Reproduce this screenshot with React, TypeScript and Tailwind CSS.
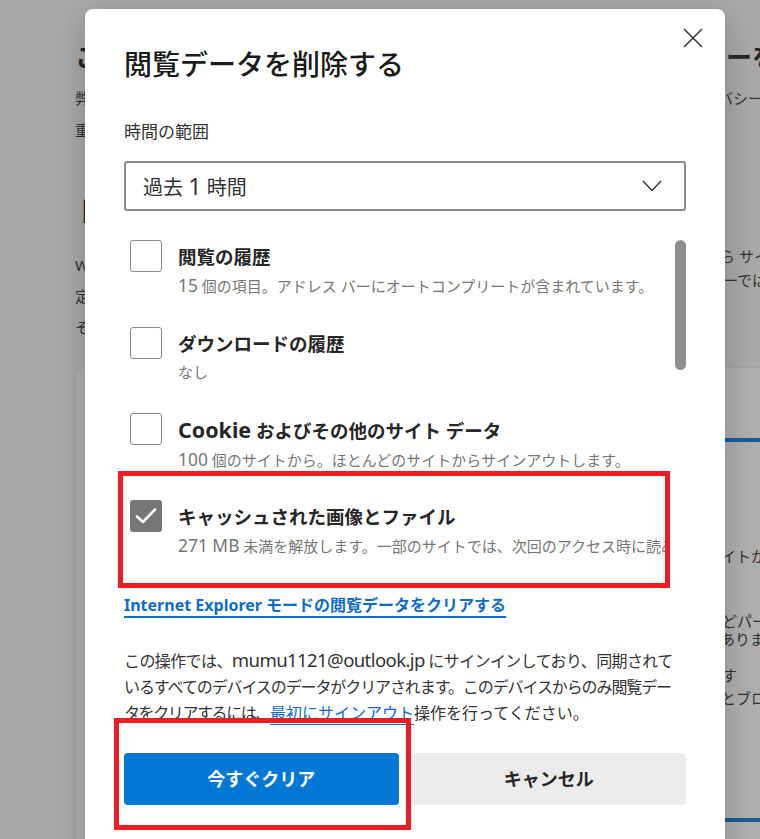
import type { ReactNode } from 'react';

type ClearItem = {
    id: number;
    title: ReactNode;
    detail: ReactNode;
    checked: boolean;
};

// Latin runs are set a little larger so they sit next to the CJK text like the UI font does
function L({ children }: { children: ReactNode }) {
    return <span className="text-[1.16em]">{children}</span>;
}

const items: ClearItem[] = [
    {
        id: 1,
        title: '閲覧の履歴',
        detail: (
            <>
                <L>15</L> 個の項目。アドレス バーにオートコンプリートが含まれています。
            </>
        ),
        checked: false,
    },
    {
        id: 2,
        title: 'ダウンロードの履歴',
        detail: 'なし',
        checked: false,
    },
    {
        id: 3,
        title: (
            <>
                <L>Cookie</L> およびその他のサイト データ
            </>
        ),
        detail: (
            <>
                <L>100</L> 個のサイトから。ほとんどのサイトからサインアウトします。
            </>
        ),
        checked: false,
    },
    {
        id: 4,
        title: 'キャッシュされた画像とファイル',
        detail: (
            <>
                <L>271 MB</L> 未満を解放します。一部のサイトでは、次回のアクセス時に読み込みが遅くなる可能性があります。
            </>
        ),
        checked: true,
    },
];

// one text line of the page behind the dialog; the middle is hidden by the dialog
function PageLine({
    left,
    right,
    cut,
    className,
    rightClassName = '',
}: {
    left: string;
    right?: string;
    cut: string;
    className: string;
    rightClassName?: string;
}) {
    return (
        <div className={`flex whitespace-nowrap ${className}`}>
            <span className={`shrink-0 overflow-hidden ${cut}`}>{left}</span>
            {right && <span className={rightClassName}>{right}</span>}
        </div>
    );
}

function Checkbox({ checked }: { checked: boolean }) {
    if (checked) {
        return (
            <div className="flex h-[32px] w-[32px] shrink-0 items-center justify-center rounded-[3px] bg-[#767676]">
                <svg width="22" height="18" viewBox="0 0 22 18" fill="none">
                    <polyline
                        points="2,9.5 8,15 20,2.5"
                        stroke="white"
                        strokeWidth="2.6"
                        strokeLinecap="round"
                        strokeLinejoin="round"
                    />
                </svg>
            </div>
        );
    }
    return (
        <div className="h-[32px] w-[32px] shrink-0 rounded-[3px] border border-[#8a8a8a] bg-white" />
    );
}

function BackgroundPage() {
    return (
        <div className="pl-[75px] text-[#262626]">
            <PageLine
                className="pt-[40px] text-[26px] font-bold leading-[34px]"
                cut="w-[651px]"
                left="こんにちは、私たちはお客様のプライバシ"
                right="ーを尊重します"
            />
            <div className="mt-[8px] text-[15px] leading-[32px] text-[#333]">
                <PageLine
                    className=""
                    cut="w-[643px]"
                    left="弊社は常に、お客様が必要とする透明性と制御を提供しつつ、お客様のプライ"
                    right="バシーを保護し"
                />
                <PageLine
                    className=""
                    cut="w-[649px]"
                    left="重します。プライバシーに関する取り組みの詳細を確認する"
                />
            </div>
            <PageLine
                className="mt-[47px] text-[28px] font-bold leading-[36px]"
                cut="w-[649px]"
                left="トラッキングの防止"
            />
            <div className="mt-[21px] text-[15px] leading-[31px] text-[#333]">
                <PageLine
                    className=""
                    rightClassName="-translate-y-[9px]"
                    cut="w-[645px]"
                    left="Web サイトではトラッカーを使用して、お客様の閲覧に関する情報を収集しています。これ"
                    right="ら サイトを"
                />
                <PageLine
                    className=""
                    rightClassName="-translate-y-[16px]"
                    cut="w-[648px]"
                    left="定した情報を使用して、サイトを改善し、パーソナル化された広告などのコンテンツを表示するサーバ"
                    right="ーではこの"
                />
                <PageLine
                    className=""
                    cut="w-[649px]"
                    left="その他のサイトに情報を送信するトラッカーもあります。"
                />
            </div>

            {/* tracking prevention card */}
            <div className="mt-[24px] h-[520px] rounded-tl-[8px] border-l border-t border-[#a2a2a2] bg-[#afafaf] pl-[24px] pt-[70px]">
                <div className="flex gap-[16px]">
                    <div className="h-[384px] w-[230px] shrink-0 rounded-[6px] border border-[#a2a2a2]" />
                    <div className="h-[384px] w-[230px] shrink-0 rounded-[6px] border border-[#a2a2a2]" />
                    <div className="h-[384px] w-[230px] shrink-0 rounded-[6px] border-[4px] border-[#1b5c98] pl-[20px] pt-[104px] text-[15px] text-[#333]">
                        <PageLine
                            className="leading-[20px]"
                            cut="w-[105px]"
                            left="すべてのサ"
                            right="イトからの"
                        />
                        <PageLine
                            className="mt-[46px] leading-[18px]"
                            cut="w-[106px]"
                            left="コンテンツな"
                            right="どパーソナル"
                        />
                        <PageLine
                            className="leading-[18px]"
                            cut="w-[104px]"
                            left="ページが壊れる可能性が"
                            right="ありません"
                        />
                        <PageLine
                            className="mt-[17px] leading-[20px]"
                            cut="w-[106px]"
                            left="ブロックしま"
                            right="す"
                        />
                        <PageLine
                            className="mt-[3px] leading-[20px]"
                            cut="w-[105px]"
                            left="既知の有害なトラッカー"
                            right="とブロック"
                        />
                    </div>
                </div>
            </div>
        </div>
    );
}

export default function App() {
    return (
        <div className="relative h-[839px] w-full overflow-hidden bg-[#a9a9a9] font-['Noto_Sans','Noto_Sans_CJK_JP',sans-serif]">
            <BackgroundPage />

            {/* Clear browsing data dialog */}
            <div className="absolute left-[85px] top-[9px] h-[860px] w-[640px] rounded-[8px] bg-white px-[39px] pt-[19px] shadow-[0_8px_32px_rgba(0,0,0,0.22)]">
                <div className="flex items-start justify-between">
                    <h2 className="mt-[18px] text-[28px] font-medium leading-[36px] text-[#1b1b1b]">
                        閲覧データを削除する
                    </h2>
                    <button className="-mr-[17px] h-[20px] w-[20px]">
                        <svg width="20" height="20" viewBox="0 0 20 20">
                            <path
                                d="M1 1L19 19M19 1L1 19"
                                stroke="#333"
                                strokeWidth="1.5"
                            />
                        </svg>
                    </button>
                </div>

                <div className="mt-[38px] text-[17px] leading-[24px] text-[#333]">
                    時間の範囲
                </div>

                <div className="mt-[17px] flex h-[50px] items-center justify-between rounded-[3px] border-2 border-[#8a8a8a] pl-[17px] pr-[22px] text-[20px] text-[#333]">
                    <span>
                        過去 <L>1</L> 時間
                    </span>
                    <svg width="20" height="12" viewBox="0 0 20 12" fill="none">
                        <polyline
                            points="1,1 10,10.5 19,1"
                            stroke="#333"
                            strokeWidth="1.4"
                        />
                    </svg>
                </div>

                {/* data types */}
                <div className="mt-[18px] flex h-[346px]">
                    <div className="min-w-0 flex-1 overflow-hidden pt-[11px]">
                        {items.map((item) => (
                            <div
                                key={item.id}
                                className="flex h-[86.5px] gap-[16px] pl-[6px]"
                            >
                                <Checkbox checked={item.checked} />
                                <div className="min-w-0 pt-[3px]">
                                    <div className="whitespace-nowrap text-[18.5px] font-bold leading-[28px] text-[#262626]">
                                        {item.title}
                                    </div>
                                    <div className="whitespace-nowrap text-[15px] leading-[28px] text-[#767676]">
                                        {item.detail}
                                    </div>
                                </div>
                            </div>
                        ))}
                    </div>
                    <div className="flex w-[18px] justify-end">
                        <div className="mt-[11px] h-[130px] w-[11px] rounded-full bg-[#8f8f8f]" />
                    </div>
                </div>

                <a
                    href="#"
                    className="mt-[18px] inline-block text-[16px] font-bold leading-[24px] text-[#0f6cc6] underline decoration-[1.5px] underline-offset-[5px]"
                >
                    <span className="text-[16px]">Internet Explorer</span> モードの閲覧データをクリアする
                </a>

                <p className="mt-[30px] whitespace-nowrap text-[16px] leading-[26px] text-[#333]">
                    <span className="tracking-[-0.6px]">
                        この操作では、<L>mumu1121@outlook.jp</L> にサインインしており、同期されて
                    </span>
                    <br />
                    <span className="tracking-[-1.1px]">
                        いるすべてのデバイスのデータがクリアされます。このデバイスからのみ閲覧デー
                    </span>
                    <br />
                    <span className="tracking-[-1.4px]">タをクリアするには、</span>
                    <a
                        href="#"
                        className="text-[#0f6cc6] underline decoration-1 underline-offset-[5px]"
                    >
                        最初にサインアウト
                    </a>
                    操作を行ってください。
                </p>

                <div className="mt-[27px] flex gap-[13px]">
                    <button className="h-[52px] flex-1 rounded-[4px] bg-[#0078d4] text-[18px] font-bold text-white">
                        今すぐクリア
                    </button>
                    <button className="h-[52px] flex-1 rounded-[4px] bg-[#ebebeb] text-[18px] font-bold text-[#262626]">
                        キャンセル
                    </button>
                </div>

                {/* red annotation boxes */}
                <div className="absolute left-[33px] top-[462px] h-[117px] w-[552px] border-[5px] border-[#ed1c24]" />
                <div className="absolute left-[29px] top-[709px] h-[112px] w-[297px] border-[5px] border-[#ed1c24]" />
            </div>
        </div>
    );
}
